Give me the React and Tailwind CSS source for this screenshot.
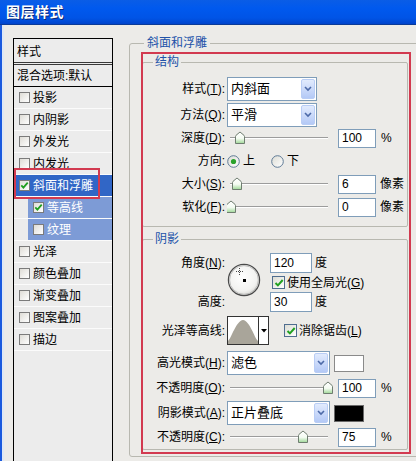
import React from "react";

function LCheck({ checked }) {
  return (
    <span className="w-[11px] h-[11px] shrink-0 border border-[#7b7b7b] bg-[linear-gradient(135deg,#dedcd6,#ffffff)] flex items-center justify-center">
      {checked && (
        <svg width="9" height="9" viewBox="0 0 9 9">
          <path d="M1.3 4.4l2.1 2.2 4.3-4.9" fill="none" stroke="#1f9f1f" strokeWidth="1.8" />
        </svg>
      )}
    </span>
  );
}

function RCheck({ checked }) {
  return (
    <span className="w-[13px] h-[13px] shrink-0 border border-[#4f6d8f] bg-[linear-gradient(135deg,#dcdcd4,#ffffff)] flex items-center justify-center">
      {checked && (
        <svg width="10" height="10" viewBox="0 0 10 10">
          <path d="M1.5 5l2.4 2.4 4.8-5.4" fill="none" stroke="#21a121" strokeWidth="2" />
        </svg>
      )}
    </span>
  );
}

function Radio({ checked }) {
  return (
    <svg width="13" height="13" viewBox="0 0 13 13" className="shrink-0">
      <defs>
        <linearGradient id="rgr" x1="0" y1="0" x2="1" y2="1">
          <stop offset="0" stopColor="#dcdcd4" />
          <stop offset="1" stopColor="#ffffff" />
        </linearGradient>
      </defs>
      <circle cx="6.5" cy="6.5" r="5.8" fill="url(#rgr)" stroke="#5f7a96" strokeWidth="1" />
      {checked && <circle cx="6.5" cy="6.5" r="2.6" fill="#2aa22a" />}
    </svg>
  );
}

function Slider({ pos, id }) {
  const x = pos - 227;
  return (
    <svg width="106" height="20" viewBox="0 0 106 20" className="shrink-0">
      <defs>
        <linearGradient id={id} x1="0" y1="0" x2="0" y2="1">
          <stop offset="0" stopColor="#ffffff" />
          <stop offset="0.55" stopColor="#f4fbf2" />
          <stop offset="1" stopColor="#9fd897" />
        </linearGradient>
      </defs>
      <line x1="3" y1="9.5" x2="101" y2="9.5" stroke="#9c9c9c" />
      <line x1="3" y1="10.5" x2="101" y2="10.5" stroke="#ffffff" />
      <path
        d={`M${x - 4.5} 15.5 V8.5 Q${x - 4.5} 7.5 ${x - 3} 6.5 L${x} 4 L${x + 3} 6.5 Q${x + 4.5} 7.5 ${x + 4.5} 8.5 V15.5 Z`}
        fill={`url(#${id})`}
        stroke="#6f7d70"
        strokeWidth="1"
      />
    </svg>
  );
}

function Num({ v }) {
  return (
    <div className="w-[38px] h-[19px] shrink-0 border border-[#7f9db9] bg-white text-[12px] leading-[17px] pl-[3px] text-black">
      {v}
    </div>
  );
}

function NumS({ v }) {
  return (
    <div className="w-[42px] h-[20px] shrink-0 border border-[#7f9db9] bg-white text-[12px] leading-[18px] pl-[3px] text-black">
      {v}
    </div>
  );
}

function DropBtn() {
  return (
    <span className="ml-auto mr-[1px] w-[14px] h-[20px] rounded-[2px] border border-[#b9cdf5] bg-[linear-gradient(#e2ebfd,#b4c9f6)] flex items-center justify-center">
      <svg width="8" height="6" viewBox="0 0 8 6">
        <path d="M1 1l3 3 3-3" fill="none" stroke="#4d6aa8" strokeWidth="1.6" />
      </svg>
    </span>
  );
}

function Label({ children }) {
  return <div className="w-[72px] shrink-0 text-right text-[12px] text-black whitespace-nowrap">{children}</div>;
}

const U = ({ c }) => <span className="underline">{c}</span>;

const items = [
  { t: "投影" },
  { t: "内阴影" },
  { t: "外发光" },
  { t: "内发光" },
  { t: "斜面和浮雕", sel: true, checked: true },
  { t: "等高线", sub: true, checked: true },
  { t: "纹理", sub: true },
  { t: "光泽" },
  { t: "颜色叠加" },
  { t: "渐变叠加" },
  { t: "图案叠加" },
  { t: "描边" },
];

export default function App() {
  return (
    <div className="relative w-[416px] h-[461px] overflow-hidden flex flex-col bg-[#ecebe8] font-[family-name:'Liberation_Sans','Noto_Sans_CJK_SC',sans-serif]">
      {/* title bar */}
      <div className="h-[25px] shrink-0 flex items-center pl-[6px] bg-[linear-gradient(#0a5de6,#0059ee_35%,#0054e6_75%,#0044cc)] border-b border-[#0a3a98]">
        <span className="text-white font-bold text-[14px] leading-none tracking-[0.5px] [text-shadow:1px_1px_0_#0b2a7a]">
          图层样式
        </span>
      </div>

      {/* body */}
      <div className="flex-1 flex min-h-0 border-l-2 border-[#1a5ade]">
        <div className="w-[2px] shrink-0 bg-[#dfe8f5]" />

        {/* left panel */}
        <div className="ml-[9px] mt-[13px] w-[100px] h-[440px] shrink-0 border border-black bg-[#ececec] flex flex-col">
          <div className="h-[26px] shrink-0 border-b-[3px] border-double border-[#3a3a3a] flex items-center pl-[3px] pt-[3px] text-[12px] text-black">
            样式
          </div>
          <div className="h-[22px] shrink-0 border-b border-black flex items-center pl-[3px] text-[12px] text-black whitespace-nowrap">
            混合选项:默认
          </div>
          {items.map((it) =>
            it.sub ? (
              <div key={it.t} className="h-[22px] shrink-0 border-b border-[#fbfbfb] flex">
                <div className="ml-[14px] flex-1 bg-[#7d9bd6] flex items-center gap-[3px] pl-[5px] text-[12px] text-white">
                  <LCheck checked={it.checked} />
                  <span>{it.t}</span>
                </div>
              </div>
            ) : (
              <div
                key={it.t}
                className={
                  it.sel
                    ? "h-[22px] shrink-0 border-b border-[#fbfbfb] bg-[#3166c6] flex items-center gap-[3px] pl-[5px] text-[12px] text-white"
                    : "h-[22px] shrink-0 border-b border-[#fbfbfb] flex items-center gap-[3px] pl-[5px] text-[12px] text-black"
                }
              >
                <LCheck checked={it.checked} />
                <span>{it.t}</span>
              </div>
            )
          )}
        </div>

        {/* right area */}
        <div className="ml-[16px] pt-[10px] shrink-0">
          <fieldset className="w-[300px] border border-[#b8b8b0] rounded-[3px] pl-[12px] pb-[6px]">
            <legend className="ml-[2px] px-[3px] text-[12px] leading-[16px] text-[#2152a8]">斜面和浮雕</legend>

            {/* structure */}
            <fieldset className="mt-[3px] w-[266px] border border-[#b8b8b0] rounded-[2px] pl-[10px] pt-[7px] pb-[9px]">
              <legend className="px-[2px] text-[12px] leading-[16px] text-[#2152a8]">结构</legend>

              <div className="h-[24px] flex items-center gap-[2px]">
                <Label>
                  样式(<U c="T" />):
                </Label>
                <div className="w-[90px] h-[24px] border border-[#7f9db9] bg-white flex items-center pl-[3px] text-[13px] text-black">
                  <span>内斜面</span>
                  <DropBtn />
                </div>
              </div>
              <div className="mt-[2px] h-[24px] flex items-center gap-[2px]">
                <Label>
                  方法(<U c="Q" />):
                </Label>
                <div className="w-[90px] h-[24px] border border-[#7f9db9] bg-white flex items-center pl-[3px] text-[13px] text-black">
                  <span>平滑</span>
                  <DropBtn />
                </div>
              </div>
              <div className="mt-[1px] h-[20px] flex items-center gap-[2px]">
                <Label>
                  深度(<U c="D" />):
                </Label>
                <Slider pos={240} id="t1" />
                <div className="ml-[3px]">
                  <Num v="100" />
                </div>
                <span className="ml-[3px] text-[12px]">%</span>
              </div>
              <div className="mt-[3px] h-[20px] flex items-center gap-[2px]">
                <Label>方向:</Label>
                <Radio checked />
                <span className="ml-[1px] text-[12px]">上</span>
                <span className="ml-[14px]">
                  <Radio />
                </span>
                <span className="ml-[1px] text-[12px]">下</span>
              </div>
              <div className="mt-[3px] h-[20px] flex items-center gap-[2px]">
                <Label>
                  大小(<U c="S" />):
                </Label>
                <Slider pos={237} id="t2" />
                <div className="ml-[3px]">
                  <Num v="6" />
                </div>
                <span className="ml-[2px] text-[12px]">像素</span>
              </div>
              <div className="mt-[3px] h-[20px] flex items-center gap-[2px]">
                <Label>
                  软化(<U c="F" />):
                </Label>
                <Slider pos={231} id="t3" />
                <div className="ml-[3px]">
                  <Num v="0" />
                </div>
                <span className="ml-[2px] text-[12px]">像素</span>
              </div>
            </fieldset>

            {/* shadow */}
            <fieldset className="mt-[4px] w-[266px] border border-[#b8b8b0] rounded-[2px] pl-[10px] pt-[6px] pb-[2px]">
              <legend className="px-[2px] text-[12px] leading-[16px] text-[#2152a8]">阴影</legend>

              <div className="flex gap-[2px]">
                <div className="flex flex-col">
                  <div className="h-[20px] flex items-center">
                    <Label>
                      角度(<U c="N" />):
                    </Label>
                  </div>
                  <div className="h-[19px]" />
                  <div className="h-[20px] flex items-center">
                    <Label>高度:</Label>
                  </div>
                </div>
                <div className="w-[41px] shrink-0">
                  <div className="mt-[10px]">
                    <svg width="34" height="34" viewBox="0 0 34 34">
                      <defs>
                        <radialGradient id="dg" cx="45%" cy="40%" r="65%">
                          <stop offset="0" stopColor="#ffffff" />
                          <stop offset="0.7" stopColor="#f2f2f0" />
                          <stop offset="1" stopColor="#cfcfcb" />
                        </radialGradient>
                      </defs>
                      <circle cx="17" cy="17" r="15.6" fill="url(#dg)" stroke="#4a4a4a" strokeWidth="1.2" />
                      <circle cx="17" cy="17" r="14.4" fill="none" stroke="#b0b0b0" strokeWidth="0.8" />
                      <rect x="16" y="16" width="3" height="3" fill="#000" />
                      <path d="M12.5 5v7M9 8.5h7" stroke="#333" strokeWidth="0.9" strokeDasharray="1 1" />
                    </svg>
                  </div>
                </div>
                <div className="flex flex-col">
                  <div className="h-[20px] flex items-center">
                    <NumS v="120" />
                    <span className="ml-[3px] text-[12px]">度</span>
                  </div>
                  <div className="h-[19px] flex items-center pl-[2px] gap-[2px]">
                    <RCheck checked />
                    <span className="text-[12px] whitespace-nowrap">
                      使用全局光(<U c="G" />)
                    </span>
                  </div>
                  <div className="h-[20px] flex items-center">
                    <NumS v="30" />
                    <span className="ml-[3px] text-[12px]">度</span>
                  </div>
                </div>
              </div>

              <div className="mt-[4px] h-[29px] flex items-center gap-[2px]">
                <Label>光泽等高线:</Label>
                <div className="flex h-[29px] border border-[#333]">
                  <svg width="30" height="27" viewBox="0 0 30 27" className="bg-white">
                    <path d="M0 27 V24 C4 20 8 4 15 3 C22 4 26 20 30 24 V27 Z" fill="#a9a59a" />
                  </svg>
                  <div className="w-[10px] border-l border-[#333] bg-white flex items-center justify-center">
                    <svg width="6" height="4" viewBox="0 0 6 4">
                      <path d="M0 0h6L3 3.5z" fill="#000" />
                    </svg>
                  </div>
                </div>
                <span className="ml-[13px]">
                  <RCheck checked />
                </span>
                <span className="text-[12px] whitespace-nowrap">
                  消除锯齿(<U c="L" />)
                </span>
              </div>

              <div className="mt-[6px] h-[24px] flex items-center gap-[2px]">
                <Label>
                  高光模式(<U c="H" />):
                </Label>
                <div className="w-[103px] h-[24px] border border-[#7f9db9] bg-white flex items-center pl-[3px] text-[13px] text-black">
                  <span>滤色</span>
                  <DropBtn />
                </div>
                <div className="ml-[2px] w-[30px] h-[17px] border border-[#8a8a8a] bg-white" />
              </div>

              <div className="mt-[3px] h-[20px] flex items-center gap-[2px]">
                <Label>
                  不透明度(<U c="O" />):
                </Label>
                <Slider pos={328} id="t4" />
                <div className="ml-[3px]">
                  <Num v="100" />
                </div>
                <span className="ml-[3px] text-[12px]">%</span>
              </div>

              <div className="mt-[3px] h-[24px] flex items-center gap-[2px]">
                <Label>
                  阴影模式(<U c="A" />):
                </Label>
                <div className="w-[103px] h-[24px] border border-[#7f9db9] bg-white flex items-center pl-[3px] text-[13px] text-black">
                  <span>正片叠底</span>
                  <DropBtn />
                </div>
                <div className="ml-[2px] w-[30px] h-[17px] border border-[#6a6a6a] bg-black" />
              </div>

              <div className="mt-[2px] h-[20px] flex items-center gap-[2px]">
                <Label>
                  不透明度(<U c="C" />):
                </Label>
                <Slider pos={303} id="t5" />
                <div className="ml-[3px]">
                  <Num v="75" />
                </div>
                <span className="ml-[3px] text-[12px]">%</span>
              </div>
            </fieldset>
          </fieldset>
        </div>
      </div>

      {/* red annotation boxes */}
      <div className="absolute left-[14px] top-[168px] w-[86px] h-[31px] border-2 border-[#d23a50] pointer-events-none" />
      <div className="absolute left-[141px] top-[52px] w-[270px] h-[402px] border-2 border-[#d23a50] pointer-events-none" />
    </div>
  );
}
